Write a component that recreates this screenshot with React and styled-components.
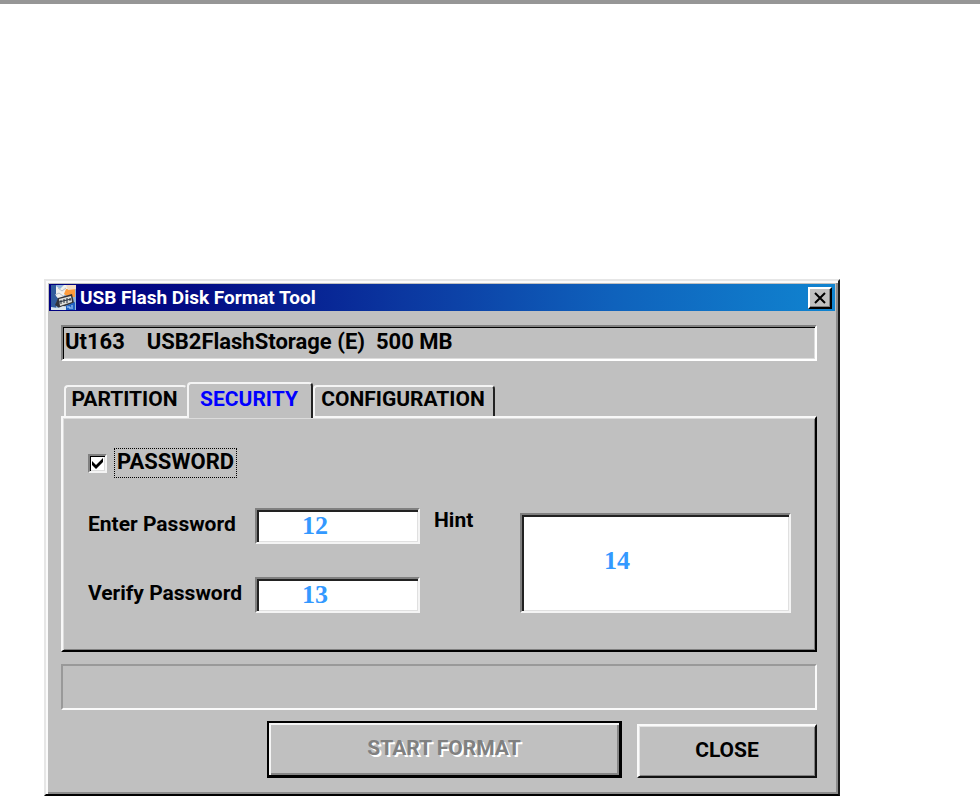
import React, { useState } from 'react';
import styled, { createGlobalStyle } from 'styled-components';

const GlobalStyle = createGlobalStyle`
  * {
    box-sizing: border-box;
  }

  body {
    margin: 0;
    background: #fff;
    font-family: Roboto, 'Liberation Sans', sans-serif;
    font-weight: 700;
    font-size: 21px;
    line-height: 24px;
    color: #000;
  }

  button,
  input,
  textarea {
    font: inherit;
    color: inherit;
    margin: 0;
    border-radius: 0;
  }
`;

const Page = styled.div`
  border-top: 4px solid #969696;
  padding: 275px 44px 4px;
`;

const Window = styled.main`
  max-width: 796px;
  background: #c0c0c0;
  border: 2px solid;
  border-color: #e6e6e6 #1a1a1a #000 #e6e6e6;
  box-shadow: inset 2px 2px 0 #fafafa, inset -2px -2px 0 #8c8c8c;
  padding: 3px;
`;

const TitleBar = styled.header`
  display: flex;
  align-items: center;
  gap: 4px;
  height: 27px;
  padding: 0 3px 0 2px;
  background: linear-gradient(to right, #000080 0%, #020a84 18%, #0b37a0 45%, #0f62bc 72%, #1084d0 100%);
`;

const Title = styled.h1`
  flex: 1;
  margin: 0;
  font-size: 19px;
  line-height: 24px;
  color: #fff;
`;

const CloseIcon = styled.button`
  display: flex;
  align-items: center;
  justify-content: center;
  width: 24px;
  height: 22px;
  padding: 0;
  background: #c0c0c0;
  border: 2px solid;
  border-color: #fff #000 #000 #fff;
  box-shadow: inset -1px -1px 0 #808080;
`;

const Content = styled.div`
  padding: 14px 18px 13px 12px;
`;

const Device = styled.div`
  height: 36px;
  padding: 0 2px;
  line-height: 30px;
  font-size: 22px;
  white-space: pre;
  border: 2px solid;
  border-color: #808080 #fff #fff #808080;
  box-shadow: inset 1px 1px 0 #000, inset -1px -1px 0 #dcdcdc;
`;

const Tabs = styled.div`
  display: flex;
  align-items: flex-end;
  margin-top: 21px;
  padding-left: 3px;
`;

const Tab = styled.button`
  height: ${(props) => (props.$active ? 36 : 31)}px;
  width: ${(props) => props.$width}px;
  margin-bottom: ${(props) => (props.$active ? -2 : 0)}px;
  padding: 0 2px 5px 0;
  line-height: 24px;
  text-align: center;
  background: #c0c0c0;
  color: ${(props) => (props.$active ? '#0000ff' : '#000')};
  border: 2px solid;
  border-color: #f4f4f4 #222 transparent #f4f4f4;
  border-bottom: 0;
  border-right-color: ${(props) => (props.$flat ? 'transparent' : '#222')};
  border-radius: 4px 4px 0 0;
  position: relative;
  z-index: ${(props) => (props.$active ? 1 : 0)};
`;

const Panel = styled.section`
  padding: 30px 24px 37px 25px;
  border: 2px solid;
  border-color: #f8f8f8 #000 #000 #f8f8f8;
  box-shadow: inset 1px 1px 0 #dcdcdc, inset -1px -1px 0 #808080;
`;

const CheckRow = styled.div`
  display: flex;
  align-items: center;
  gap: 7px;
`;

const CheckBox = styled.span`
  position: relative;
  width: 19px;
  height: 19px;

  input {
    display: block;
    appearance: none;
    width: 100%;
    height: 100%;
    background: #fff;
    border: 2px solid;
    border-color: #808080 #f4f4f4 #f4f4f4 #808080;
    box-shadow: inset 1px 1px 0 #000, inset -1px -1px 0 #dcdcdc;
  }

  svg {
    position: absolute;
    top: 4px;
    left: 4px;
    pointer-events: none;
  }
`;

const CheckLabel = styled.label`
  padding: 1px 2px 3px;
  font-size: 22px;
  line-height: 24px;
  border: 1px dotted #000;
`;

const Fields = styled.div`
  display: flex;
  align-items: flex-start;
  margin-top: 30px;
`;

const Credentials = styled.div`
  display: grid;
  grid-template-columns: 167px minmax(80px, 165px);
  row-gap: 33px;
  align-items: start;
`;

const Label = styled.label`
  line-height: 32px;
  white-space: nowrap;
`;

const sunken = `
  display: block;
  background: #fff;
  color: #3399ff;
  font-family: 'Liberation Serif', serif;
  font-weight: 700;
  font-size: 26px;
  line-height: 28px;
  border: 2px solid;
  border-color: #808080 #f4f4f4 #f4f4f4 #808080;
  box-shadow: inset 2px 2px 0 #222, inset -1px -1px 0 #e0e0e0;
  outline: none;
`;

const TextBox = styled.input`
  ${sunken}
  width: 100%;
  height: 36px;
  padding: 0 4px 0 45px;
`;

const HintLabel = styled(Label)`
  width: 86px;
  margin-left: 14px;
  line-height: 24px;
`;

const HintBox = styled.textarea`
  ${sunken}
  flex: 1;
  min-width: 0;
  height: 100px;
  margin-top: 5px;
  padding: 32px 4px 0 82px;
  resize: none;
  overflow: hidden;
`;

const Status = styled.div`
  height: 46px;
  margin-top: 12px;
  border: 2px solid;
  border-color: #999 #fafafa #fafafa #999;
`;

const Actions = styled.footer`
  display: flex;
  justify-content: flex-end;
  align-items: flex-end;
  gap: 15px;
  margin-top: 11px;
`;

const ActionButton = styled.button`
  width: 180px;
  height: 54px;
  padding: 0 0 2px;
  background: #c0c0c0;
  border: 2px solid;
  border-color: #fafafa #111 #111 #fafafa;
  box-shadow: inset 1px 1px 0 #e4e4e4, inset -1px -1px 0 #808080;
`;

const StartButton = styled(ActionButton)`
  flex: 0 1 355px;
  height: 57px;
  border-color: #000;
  border-width: 2px 3px 3px 2px;
  box-shadow: inset 2px 2px 0 #f4f4f4, inset -2px -2px 0 #868686;

  &:disabled {
    color: #808080;
    text-shadow: 2px 2px 0 #fff;
  }
`;

const AppIcon = () => (
  <svg width="25" height="25" viewBox="0 0 25 25" aria-hidden="true">
    <rect width="25" height="25" fill="#8fb4dc" />
    <path d="M0 0h5v7l3 5-3 6v7H0z" fill="#315c9c" />
    <path d="M5 1l4 3 4-4h4v7l-5 4 3 3-5 3-5-6z" fill="#f1f0ec" />
    <path d="M7 3l4 3 4-3M4 10l4-2 4 3" fill="none" stroke="#b4bcc8" strokeWidth="1" />
    <path d="M15 4h9v8h-7l-4-3z" fill="#ff9c3c" />
    <path d="M15 0h10v4l-8 1z" fill="#f3dcc4" />
    <path d="M7 13l14-4 2 9-15 5-4-3z" fill="#34343a" />
    <path d="M8 14l12-3 1 6-12 4z" fill="#deded8" />
    <path d="M10 15v4M13 14v4M16 13v5M19 13v3M8 17l12-3" stroke="#26303f" strokeWidth="1" />
    <path d="M0 22l7 1 5-2 4 1v3H0z" fill="#dbe6ee" />
    <path d="M15 21l9-4v8h-9z" fill="#1f61c4" />
    <path d="M16 22h3v2M21 20v4" fill="none" stroke="#bcdcff" strokeWidth="1" />
  </svg>
);

const App = () => {
  const [secured, setSecured] = useState(true);

  return (
    <>
      <GlobalStyle />
      <Page>
        <Window>
          <TitleBar>
            <AppIcon />
            <Title>USB Flash Disk Format Tool</Title>
            <CloseIcon type="button" aria-label="Close window">
              <svg width="14" height="12" viewBox="0 0 14 12" fill="none">
                <path d="M2 1l10 10M12 1L2 11" stroke="#000" strokeWidth="2" />
              </svg>
            </CloseIcon>
          </TitleBar>
          <Content>
            <Device>{'Ut163    USB2FlashStorage (E)  500 MB'}</Device>
            <Tabs role="tablist">
              <Tab type="button" role="tab" $width={123} $flat>PARTITION</Tab>
              <Tab type="button" role="tab" aria-selected="true" $width={126} $active>SECURITY</Tab>
              <Tab type="button" role="tab" $width={182}>CONFIGURATION</Tab>
            </Tabs>
            <Panel>
              <CheckRow>
                <CheckBox>
                  <input
                    id="secured"
                    type="checkbox"
                    checked={secured}
                    onChange={(e) => setSecured(e.target.checked)}
                  />
                  {secured && (
                    <svg width="12" height="12" viewBox="0 0 12 12">
                      <path d="M0 3l4 4 7-7v4l-7 7-4-4z" fill="#000" />
                    </svg>
                  )}
                </CheckBox>
                <CheckLabel htmlFor="secured">PASSWORD</CheckLabel>
              </CheckRow>
              <Fields>
                <Credentials>
                  <Label htmlFor="enter">Enter Password</Label>
                  <TextBox id="enter" type="text" defaultValue="12" />
                  <Label htmlFor="verify">Verify Password</Label>
                  <TextBox id="verify" type="text" defaultValue="13" />
                </Credentials>
                <HintLabel htmlFor="hint">Hint</HintLabel>
                <HintBox id="hint" defaultValue="14" />
              </Fields>
            </Panel>
            <Status role="status" />
            <Actions>
              <StartButton type="button" disabled>START FORMAT</StartButton>
              <ActionButton type="button">CLOSE</ActionButton>
            </Actions>
          </Content>
        </Window>
      </Page>
    </>
  );
};

export default App;
